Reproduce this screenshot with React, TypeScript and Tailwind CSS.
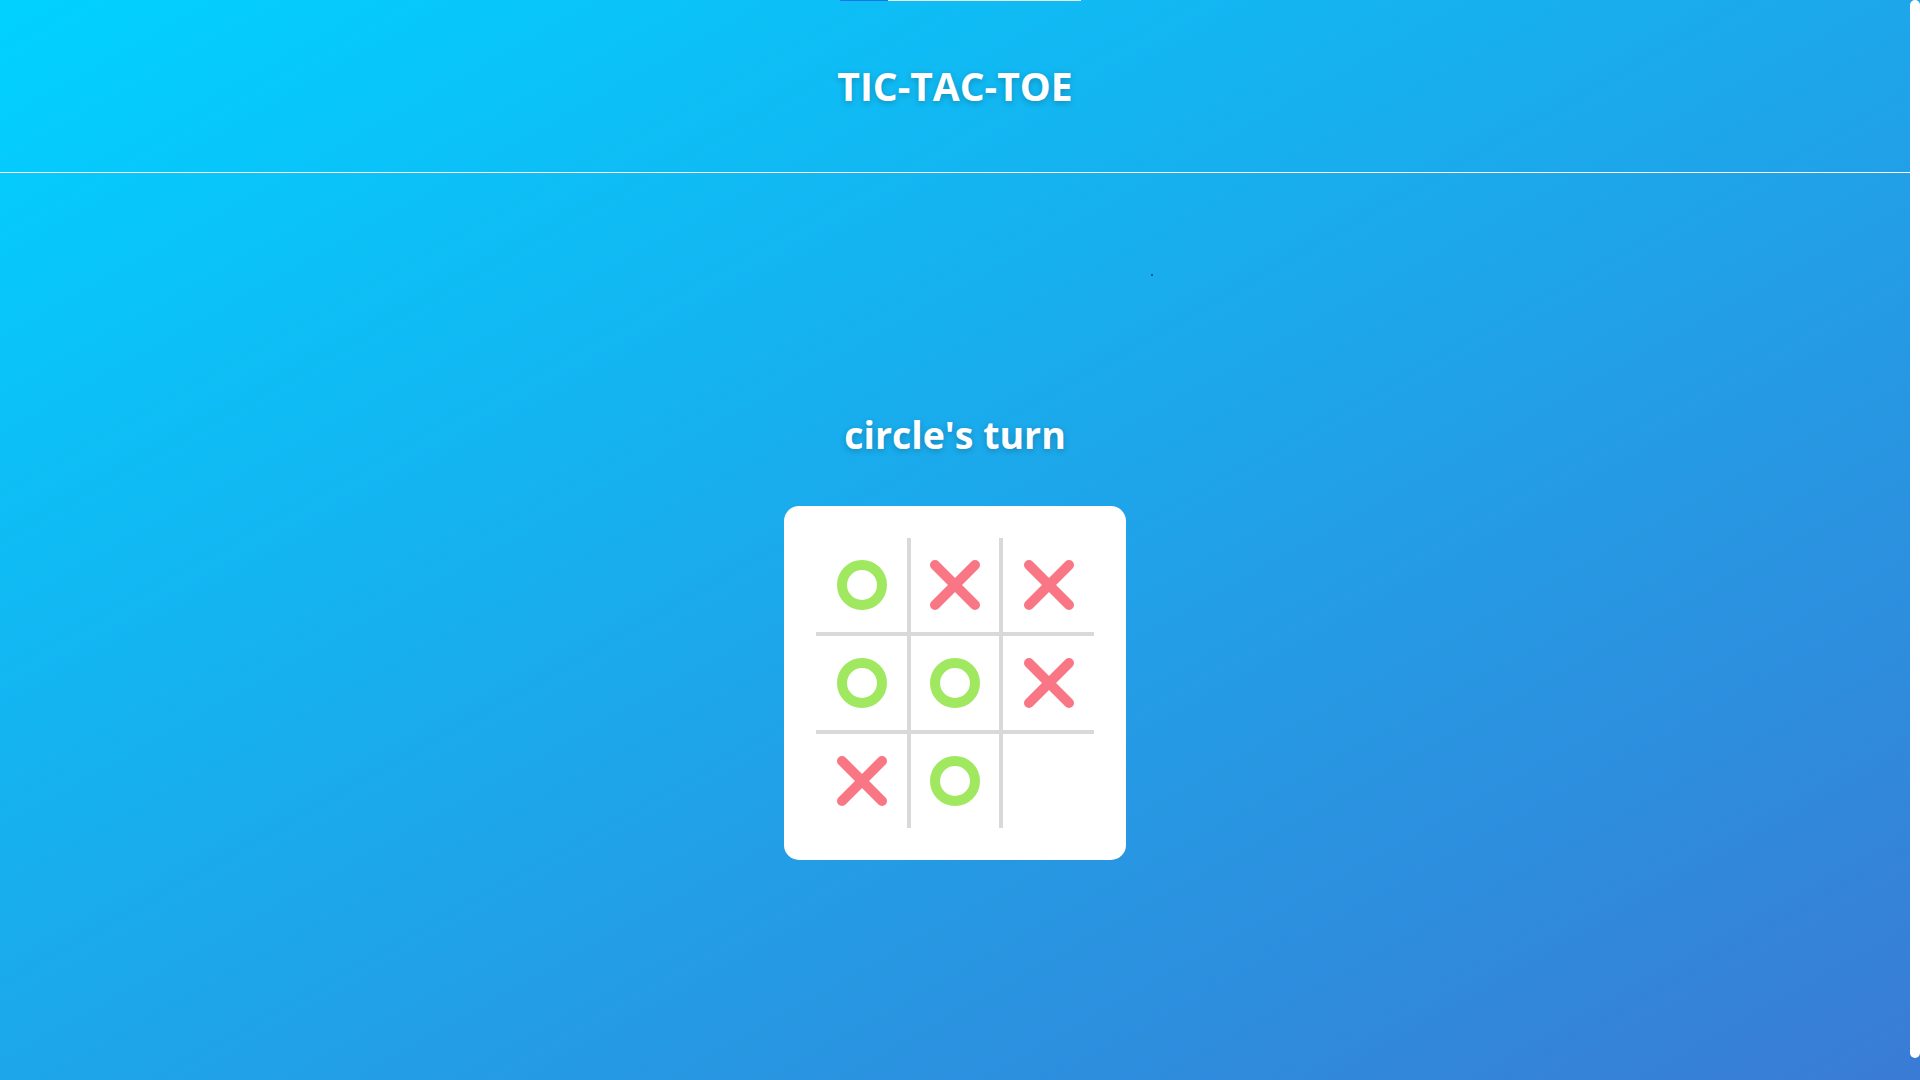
import React from "react";

type Mark = "O" | "X" | "";

const board: Mark[][] = [
  ["O", "X", "X"],
  ["O", "O", "X"],
  ["X", "O", ""],
];

function Circle() {
  return (
    <svg width="50" height="50" viewBox="0 0 50 50">
      <circle cx="25" cy="25" r="20" fill="none" stroke="#a0e85f" strokeWidth="10" />
    </svg>
  );
}

function Cross() {
  return (
    <svg width="50" height="50" viewBox="0 0 50 50">
      <line x1="5" y1="5" x2="45" y2="45" stroke="#f97685" strokeWidth="10" strokeLinecap="round" />
      <line x1="45" y1="5" x2="5" y2="45" stroke="#f97685" strokeWidth="10" strokeLinecap="round" />
    </svg>
  );
}

export default function App() {
  return (
    <div className="flex h-[1080px] w-full overflow-hidden bg-[linear-gradient(to_bottom_right,#00d2ff,#3a7bd5)] font-['Open_Sans',sans-serif]">
      <div className="flex flex-1 flex-col">
        <div className="flex h-px pl-[840px]">
          <div className="h-px w-[48px] bg-[#1a73e8]" />
          <div className="h-px w-[193px] bg-[#e8e8e8]" />
        </div>
        <header className="flex h-[172px] items-center justify-center border-b border-white pb-[3px]">
          <h1 className="text-[39px] font-bold leading-none text-white [text-shadow:0_2px_6px_rgba(0,0,0,0.22)]">
            TIC-TAC-TOE
          </h1>
        </header>
        <div className="flex flex-col">
          <div className="ml-[1151px] mt-[101px] h-[2px] w-[2px] bg-[#0f5a94]" />
          <h2 className="mt-[135px] text-center text-[37.5px] font-bold leading-[48px] text-white [text-shadow:0_2px_6px_rgba(0,0,0,0.22)]">
            circle's turn
          </h2>
          <div className="mt-[47px] flex justify-center">
            <div className="rounded-[15px] bg-white p-8">
              <div className="grid grid-cols-[95px_92px_91px] grid-rows-[98px_98px_94px]">
                {board.map((row, r) =>
                  row.map((cell, c) => (
                    <div
                      key={`${r}-${c}`}
                      className={[
                        "flex items-center justify-center border-[#d9d9d9]",
                        c < 2 ? "border-r-4" : "",
                        r < 2 ? "border-b-4" : "",
                      ].join(" ")}
                    >
                      {cell === "O" ? <Circle /> : cell === "X" ? <Cross /> : null}
                    </div>
                  ))
                )}
              </div>
            </div>
          </div>
        </div>
      </div>
      <div className="w-[10px]">
        <div className="h-[1058px] w-[10px] rounded-full bg-white" />
      </div>
    </div>
  );
}
